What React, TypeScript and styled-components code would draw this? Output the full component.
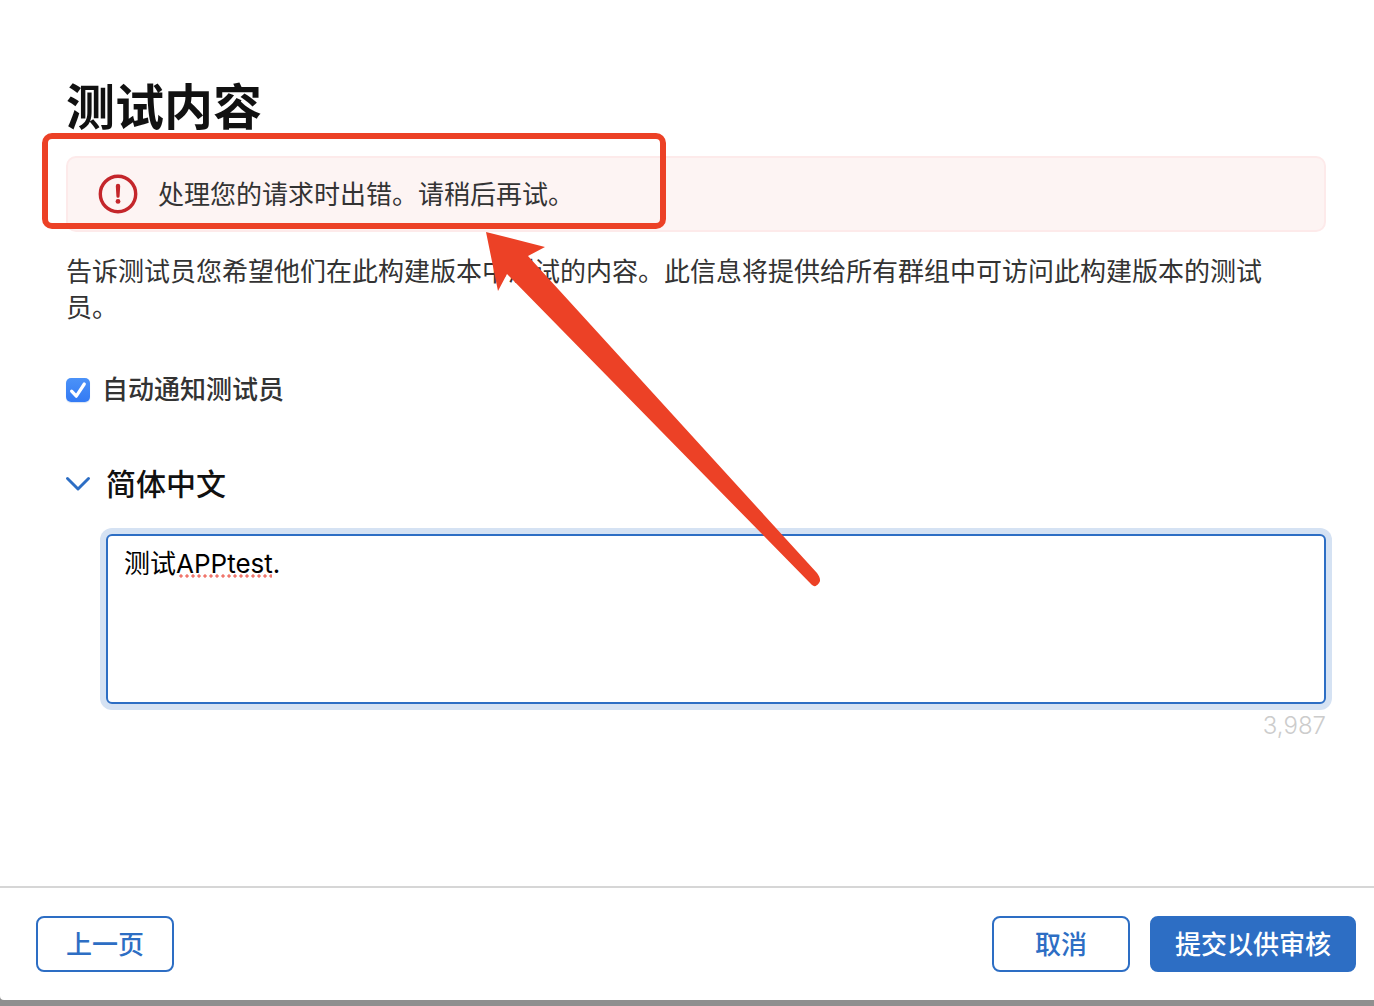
import { useId, useState } from "react";
import styled, { createGlobalStyle } from "styled-components";

const color = {
  ink: "#111111",
  text: "#333333",
  blue: "#2d6ec4",
  ring: "#d5e2f3",
  danger: "#c4262b",
  mark: "#ec4126",
};

const GlobalStyle = createGlobalStyle`
  *, *::before, *::after { box-sizing: border-box; }
  body {
    margin: 0;
    background: #8f8f8f;
    color: ${color.text};
    font-family: Inter, "Noto Sans CJK SC", sans-serif;
    font-size: 26px;
    line-height: 36px;
  }
  button, textarea { font: inherit; }
`;

const Screen = styled.div`
  min-height: 100vh;
  padding-bottom: 6px;
  display: flex;
  flex-direction: column;
`;

const Dialog = styled.section`
  flex: 1;
  display: flex;
  flex-direction: column;
  background: #fff;
  border-bottom-left-radius: 4px;
`;

const Content = styled.main`
  flex: 1;
  padding: 74px 48px 48px 66px;
`;

const Title = styled.h1`
  margin: 0 0 14px;
  color: ${color.ink};
  font-size: 49px;
  line-height: 68px;
  font-weight: 700;
`;

const AlertArea = styled.div`
  position: relative;
  margin-bottom: 22px;
`;

const Alert = styled.div`
  display: flex;
  align-items: center;
  gap: 20px;
  padding: 17px 30px;
  border: 2px solid #fdeaea;
  border-radius: 10px;
  background: #fdf4f3;
`;

const AlertText = styled.span`
  padding-top: 2px;
`;

const AlertIcon = styled.svg`
  width: 40px;
  height: 40px;
  margin: -2px 0;
  flex: none;
`;

const Highlight = styled.div`
  position: absolute;
  top: -23px;
  left: -24px;
  width: 624px;
  height: 96px;
  border: 6px solid ${color.mark};
  border-radius: 10px;
  pointer-events: none;
`;

const Arrow = styled.svg`
  position: absolute;
  top: 76px;
  left: 420px;
  width: 336px;
  height: 356px;
  z-index: 2;
  pointer-events: none;
`;

const Description = styled.p`
  margin: 0 0 46px;
  padding-right: 48px;
`;

const CheckRow = styled.label`
  display: flex;
  align-items: center;
  gap: 12px;
  width: fit-content;
  margin-bottom: 54px;
  font-weight: 500;
`;

const CheckControl = styled.span`
  position: relative;
  display: flex;
  width: 24px;
  height: 24px;
`;

const Checkbox = styled.input`
  appearance: none;
  width: 24px;
  height: 24px;
  margin: 0;
  border: 1px solid #b5b5b5;
  border-radius: 5px;
  background: #fff;
  &:checked {
    border: 0;
    background: linear-gradient(#4b92f8, #337af4);
    box-shadow: 0 1px 1px #d5e2f3;
  }
`;

const CheckMark = styled.svg`
  position: absolute;
  inset: 0;
  width: 24px;
  height: 24px;
  pointer-events: none;
`;

const LocaleHeading = styled.h2`
  margin: 0 0 28px;
  font-size: 30px;
  line-height: 44px;
  font-weight: 500;
`;

const LocaleToggle = styled.button`
  display: flex;
  align-items: center;
  gap: 16px;
  padding: 0;
  border: 0;
  background: none;
  color: ${color.ink};
`;

const Chevron = styled.svg<{ $open: boolean }>`
  width: 24px;
  height: 16px;
  transform: ${(p) => (p.$open ? "none" : "rotate(-90deg)")};
`;

const Field = styled.div`
  position: relative;
  display: flex;
  flex-direction: column;
  margin-left: 40px;
`;

const NotesInput = styled.textarea`
  height: 170px;
  padding: 10px 16px;
  border: 2px solid ${color.blue};
  border-radius: 6px;
  outline: 0;
  box-shadow: 0 0 0 6px ${color.ring};
  background: #fff;
  color: #000;
  resize: none;
`;

const SpellingMark = styled.span`
  position: absolute;
  top: 40px;
  left: 72px;
  width: 94px;
  height: 4px;
  background: radial-gradient(circle, #f0766c 0 1px, #f0766c 40%, transparent 50%) 0 0 / 6px 4px repeat-x;
  pointer-events: none;
`;

const Counter = styled.output`
  align-self: flex-end;
  margin-top: 4px;
  color: #cccccc;
  font-size: 24px;
  font-weight: 300;
`;

const Footer = styled.footer`
  display: flex;
  gap: 20px;
  padding: 28px 18px 28px 36px;
  border-top: 2px solid #d6d6d6;
`;

const Button = styled.button<{ $primary?: boolean }>`
  min-width: 138px;
  height: 56px;
  padding: 2px 23px 0;
  border: 2px solid ${color.blue};
  border-radius: 8px;
  background: ${(p) => (p.$primary ? color.blue : "#fff")};
  color: ${(p) => (p.$primary ? "#fff" : color.blue)};
  font-weight: 500;
  white-space: nowrap;
`;

const BackButton = styled(Button)`
  margin-right: auto;
`;

export default function App() {
  const [notify, setNotify] = useState(true);
  const [open, setOpen] = useState(true);
  const [notes, setNotes] = useState("测试APPtest.");
  const checkId = useId();

  return (
    <>
      <GlobalStyle />
      <Screen>
        <Dialog>
          <Content>
            <Title>测试内容</Title>
            <AlertArea>
              <Alert role="alert">
                <AlertIcon viewBox="0 0 40 40" aria-hidden="true">
                  <circle cx="20" cy="20" r="17.7" fill="none" stroke={color.danger} strokeWidth="3.4" />
                  <path d="M17.8 12a2.2 2.2 0 0 1 4.4 0l-.6 10.2a1.6 1.6 0 0 1-3.2 0z" fill={color.danger} />
                  <circle cx="20" cy="27.4" r="2.4" fill={color.danger} />
                </AlertIcon>
                <AlertText>处理您的请求时出错。请稍后再试。</AlertText>
              </Alert>
              <Highlight />
              <Arrow viewBox="0 0 336 356" aria-hidden="true">
                <path
                  d="M0 0 59 15 42 24 331 341C334 345 335 349 333 351C330 355 328 355 325 352L21 42 12 59Z"
                  fill={color.mark}
                />
              </Arrow>
            </AlertArea>
            <Description>
              告诉测试员您希望他们在此构建版本中测试的内容。此信息将提供给所有群组中可访问此构建版本的测试员。
            </Description>
            <CheckRow htmlFor={checkId}>
              <CheckControl>
                <Checkbox
                  id={checkId}
                  type="checkbox"
                  checked={notify}
                  onChange={(e) => setNotify(e.target.checked)}
                />
                {notify && (
                  <CheckMark viewBox="0 0 24 24" aria-hidden="true">
                    <path
                      d="M5.6 13.2 10.3 18.2 18.3 6"
                      fill="none"
                      stroke="#fff"
                      strokeWidth="3.2"
                      strokeLinecap="round"
                      strokeLinejoin="round"
                    />
                  </CheckMark>
                )}
              </CheckControl>
              自动通知测试员
            </CheckRow>
            <LocaleHeading>
              <LocaleToggle type="button" aria-expanded={open} onClick={() => setOpen(!open)}>
                <Chevron $open={open} viewBox="0 0 24 16" aria-hidden="true">
                  <path
                    d="M1.5 2.5 12 13 22.5 2.5"
                    fill="none"
                    stroke={color.blue}
                    strokeWidth="2.9"
                    strokeLinecap="round"
                    strokeLinejoin="round"
                  />
                </Chevron>
                简体中文
              </LocaleToggle>
            </LocaleHeading>
            {open && (
              <Field>
                <NotesInput
                  aria-label="简体中文"
                  spellCheck={false}
                  maxLength={4000}
                  value={notes}
                  onChange={(e) => setNotes(e.target.value)}
                />
                {notes.startsWith("测试APPtest") && <SpellingMark />}
                <Counter>3,987</Counter>
              </Field>
            )}
          </Content>
          <Footer>
            <BackButton type="button">上一页</BackButton>
            <Button type="button">取消</Button>
            <Button type="button" $primary>
              提交以供审核
            </Button>
          </Footer>
        </Dialog>
      </Screen>
    </>
  );
}
